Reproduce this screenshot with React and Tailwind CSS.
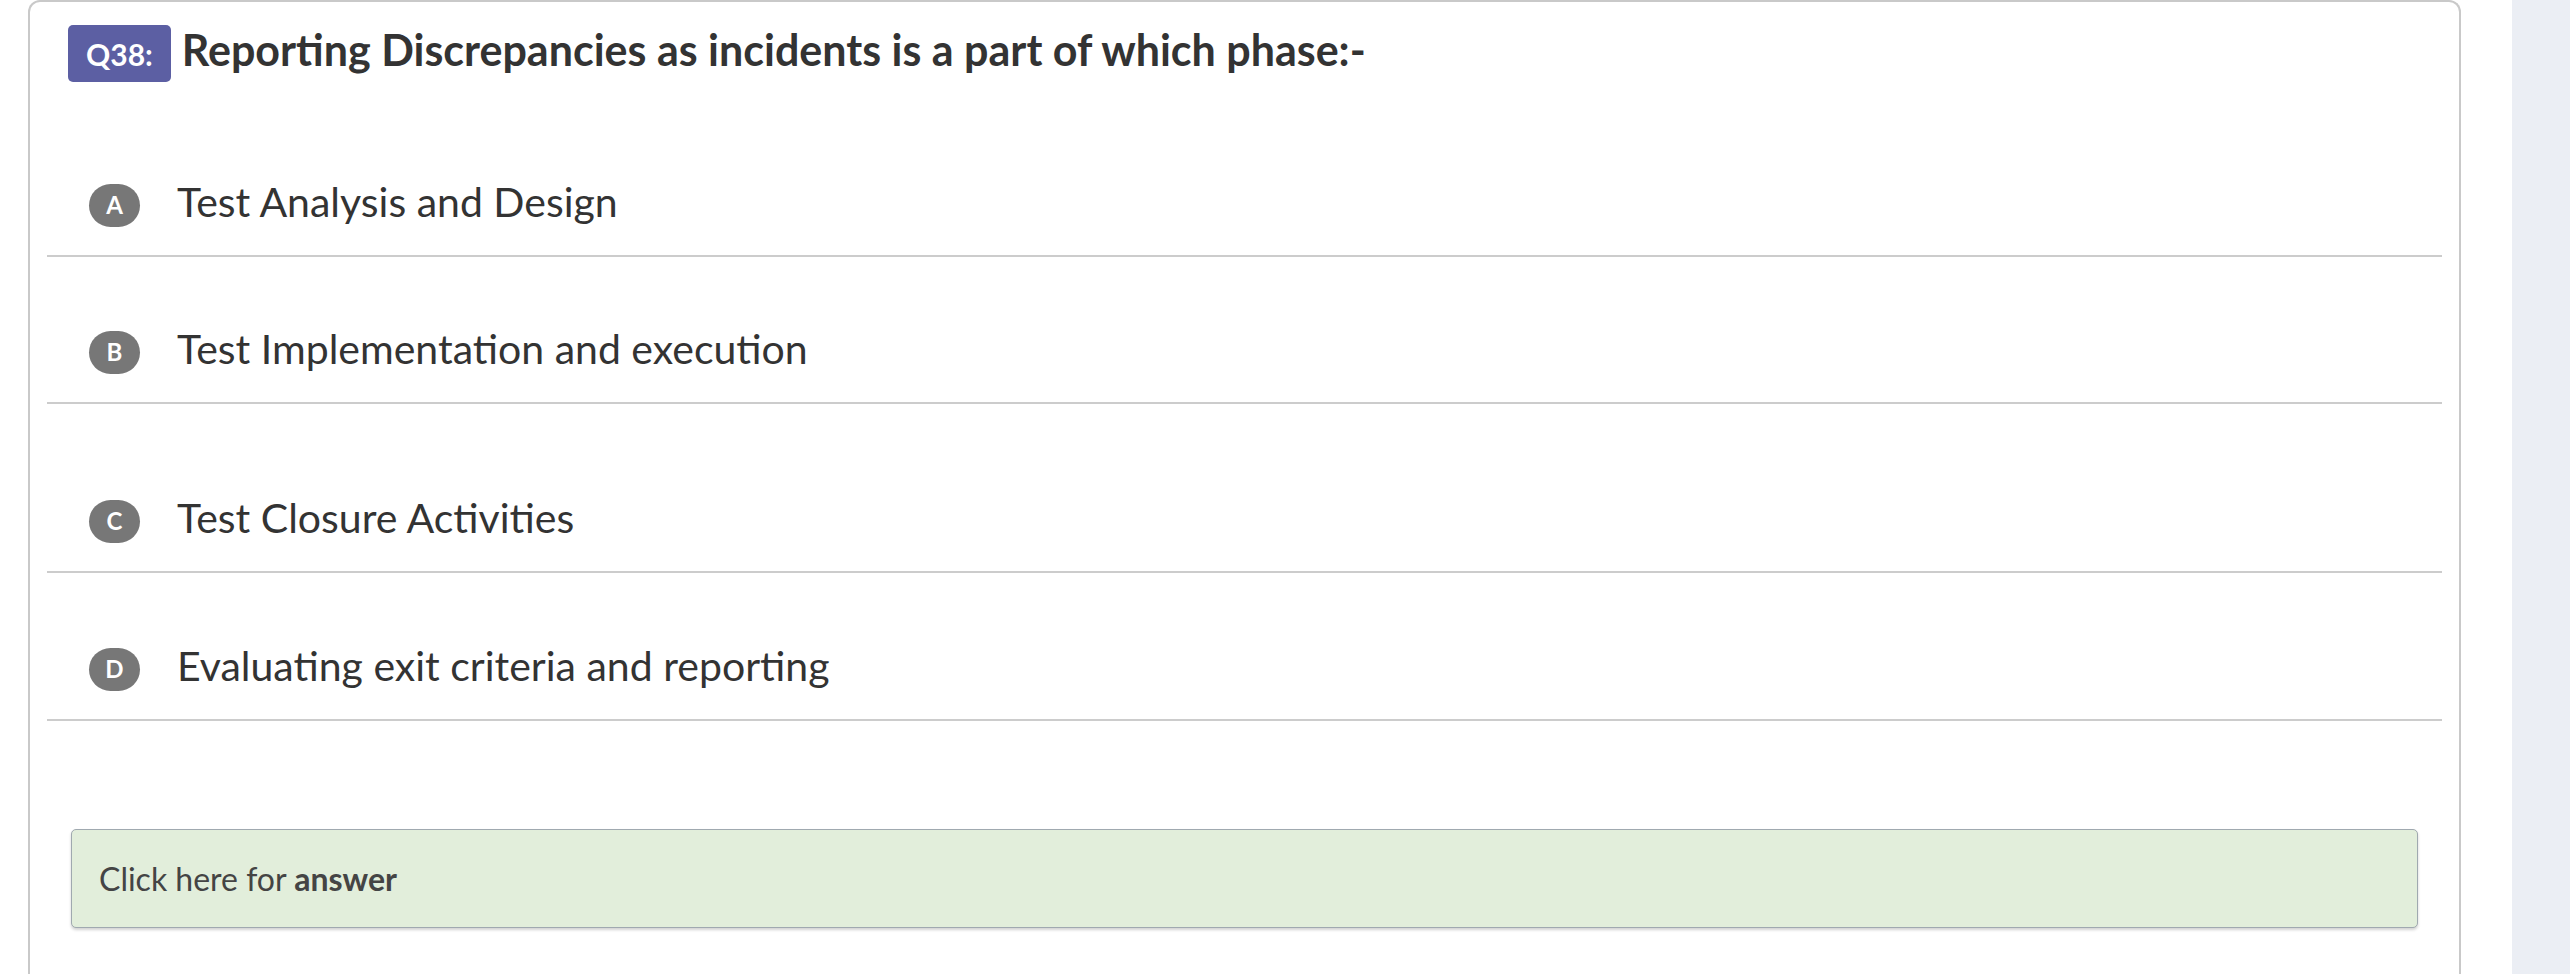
import React from "react";

const options = [
  { letter: "A", text: "Test Analysis and Design", h: "h-[175px]" },
  { letter: "B", text: "Test Implementation and execution", h: "h-[147px]" },
  { letter: "C", text: "Test Closure Activities", h: "h-[169px]" },
  { letter: "D", text: "Evaluating exit criteria and reporting", h: "h-[148px]" },
];

export default function App() {
  return (
    <div className="flex w-full h-[974px] overflow-hidden bg-white font-['Lato',_'Open_Sans',_sans-serif]">
      <main className="flex-1 pl-[28px] pr-[51px]">
        <div className="h-[990px] rounded-t-[12px] border-2 border-b-0 border-[#c9c9c9] bg-white">
          <div className="flex items-center pl-[38px] pt-[23px]">
            <span className="inline-flex h-[57px] items-center rounded-[5px] bg-[#5c5fa3] px-[18px] pt-[2px] text-[30px] font-bold text-white">
              Q38:
            </span>
            <h2 className="ml-[11px] -mt-[8px] text-[43px] font-bold leading-[57px] text-[#333]">
              Reporting Discrepancies as incidents is a part of which phase:-
            </h2>
          </div>
          <div className="px-[17px]">
            {options.map((o) => (
              <div
                key={o.letter}
                className={`flex items-end border-b-2 border-[#cccccc] pb-[23px] ${o.h}`}
              >
                <div className="flex h-[60px] items-center">
                  <span className="ml-[42px] mt-[6px] flex h-[43px] w-[51px] items-center justify-center rounded-full bg-[#777777] text-[24px] font-bold text-white">
                    {o.letter}
                  </span>
                  <span className="ml-[37px] text-[41px] leading-[60px] text-[#333]">
                    {o.text}
                  </span>
                </div>
              </div>
            ))}
          </div>
          <div className="mx-[41px] mt-[108px] flex h-[99px] items-center rounded-[5px] border border-[#a0a9b0] bg-[#e2eedb] pl-[27px] shadow-[0_2px_3px_rgba(0,0,0,0.18)]">
            <span className="text-[32px] text-[#444]">
              Click here for <b className="font-bold">answer</b>
            </span>
          </div>
        </div>
      </main>
      <aside className="w-[58px] bg-[#ebeef4]" />
    </div>
  );
}
